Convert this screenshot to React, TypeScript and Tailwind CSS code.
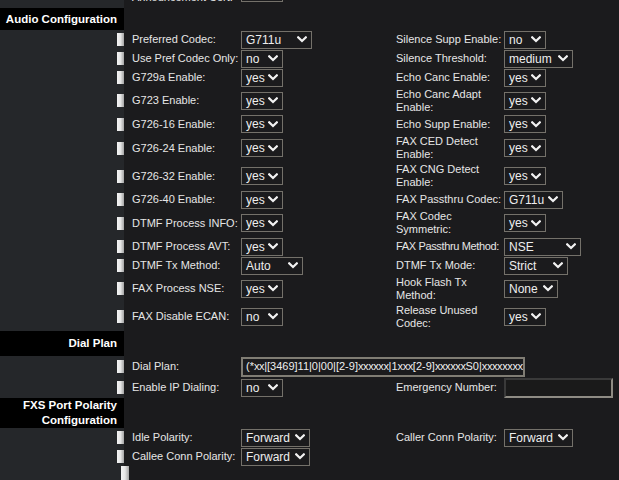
import React from "react";

const SIDE = "bg-[#25272a]";
const MAIN = "bg-[#1b1b1d]";

const H: Record<number, string> = {
  19: "h-[19px]",
  20: "h-[20px]",
  21: "h-[21px]",
  27: "h-[27px]",
  28: "h-[28px]",
  29: "h-[29px]",
};

const W: Record<number, string> = {
  42: "w-[42px]",
  54: "w-[54px]",
  59: "w-[59px]",
  62: "w-[62px]",
  64: "w-[64px]",
  69: "w-[69px]",
  71: "w-[71px]",
  77: "w-[77px]",
};

function Chevron() {
  return (
    <svg width="10" height="7" viewBox="0 0 10 7" className="shrink-0">
      <path d="M1.2 1.4 L5 5 L8.8 1.4" fill="none" stroke="#f2f2f2" strokeWidth="2.2" strokeLinecap="square" />
    </svg>
  );
}

function Sel({ t, w }: { t: string; w: number }) {
  return (
    <div
      className={`${W[w]} h-[18px] border border-[#74716a] flex items-center justify-between pl-[4px] pr-[4px] text-[12px] leading-none text-[#eeeeee]`}
    >
      <span>{t}</span>
      <Chevron />
    </div>
  );
}

function Handle() {
  return <div className="w-[7px] h-[13px] bg-gradient-to-r from-[#f4f4f4] via-[#e6e6e6] to-[#a4a4a4]" />;
}

function Side({ handle = true }: { handle?: boolean }) {
  return (
    <div className={`w-[124px] shrink-0 ${SIDE} flex items-center justify-end`}>
      {handle ? <Handle /> : null}
    </div>
  );
}

type Row = {
  l: string;
  lv: [string, number];
  r: string;
  rv: [string, number];
  h: number;
  nw?: boolean;
};

const audio: Row[] = [
  { l: "Preferred Codec:", lv: ["G711u", 71], r: "Silence Supp Enable:", rv: ["no", 42], h: 19 },
  { l: "Use Pref Codec Only:", lv: ["no", 42], r: "Silence Threshold:", rv: ["medium", 69], h: 19 },
  { l: "G729a Enable:", lv: ["yes", 42], r: "Echo Canc Enable:", rv: ["yes", 42], h: 19 },
  { l: "G723 Enable:", lv: ["yes", 42], r: "Echo Canc Adapt Enable:", rv: ["yes", 42], h: 27 },
  { l: "G726-16 Enable:", lv: ["yes", 42], r: "Echo Supp Enable:", rv: ["yes", 42], h: 20 },
  { l: "G726-24 Enable:", lv: ["yes", 42], r: "FAX CED Detect Enable:", rv: ["yes", 42], h: 28 },
  { l: "G726-32 Enable:", lv: ["yes", 42], r: "FAX CNG Detect Enable:", rv: ["yes", 42], h: 28 },
  { l: "G726-40 Enable:", lv: ["yes", 42], r: "FAX Passthru Codec:", rv: ["G711u", 59], h: 19 },
  { l: "DTMF Process INFO:", lv: ["yes", 42], r: "FAX Codec Symmetric:", rv: ["yes", 42], h: 28 },
  { l: "DTMF Process AVT:", lv: ["yes", 42], r: "FAX Passthru Method:", rv: ["NSE", 77], h: 19, nw: true },
  { l: "DTMF Tx Method:", lv: ["Auto", 62], r: "DTMF Tx Mode:", rv: ["Strict", 64], h: 19 },
  { l: "FAX Process NSE:", lv: ["yes", 42], r: "Hook Flash Tx Method:", rv: ["None", 54], h: 27 },
  { l: "FAX Disable ECAN:", lv: ["no", 42], r: "Release Unused Codec:", rv: ["yes", 42], h: 29 },
];

function FormRow({ row }: { row: Row }) {
  return (
    <div className={`flex ${H[row.h]}`}>
      <Side />
      <div className={`flex-1 ${MAIN} flex items-center`}>
        <div className="w-[117px] shrink-0 pl-[8px] whitespace-nowrap">{row.l}</div>
        <div className="w-[155px] shrink-0">
          <Sel t={row.lv[0]} w={row.lv[1]} />
        </div>
        <div
          className={`w-[108px] shrink-0 leading-[13px] ${row.nw ? "whitespace-nowrap tracking-[-0.35px]" : ""}`}
        >
          {row.r}
        </div>
        <div>
          <Sel t={row.rv[0]} w={row.rv[1]} />
        </div>
      </div>
    </div>
  );
}

function Header({ children, cls }: { children: React.ReactNode; cls: string }) {
  return (
    <div className={`flex ${cls}`}>
      <div className="w-[124px] shrink-0 bg-black text-white font-bold text-[11.5px] text-right pr-[7px] flex flex-col justify-center leading-[15px]">
        {children}
      </div>
      <div className={`flex-1 ${MAIN}`} />
    </div>
  );
}

function X({ children }: { children: string }) {
  return <span className="tracking-[-0.4px]">{children}</span>;
}

export default function App() {
  return (
    <div
      className={`w-[619px] h-[480px] overflow-hidden ${MAIN} text-[11px] text-[#e6e6e6]`}
      style={{ fontFamily: '"Liberation Sans", Arial, Helvetica, sans-serif' }}
    >
      {/* partially visible row at top */}
      <div className="flex h-[19px] -mt-[16px]">
        <Side handle={false} />
        <div className={`flex-1 ${MAIN} flex items-start`}>
          <div className="w-[117px] shrink-0 pl-[8px] whitespace-nowrap self-end leading-[13px] translate-y-[1px]">
            Announcement Cert:
          </div>
          <div className="w-[155px] shrink-0">
            <Sel t="no" w={42} />
          </div>
        </div>
      </div>
      <div className="flex h-[5px]">
        <Side handle={false} />
        <div className={`flex-1 ${MAIN}`} />
      </div>

      <Header cls="h-[22px]">Audio Configuration</Header>

      {audio.map((r) => (
        <FormRow key={r.l} row={r} />
      ))}

      <Header cls="h-[25px]">Dial Plan</Header>

      <div className="flex h-[21px]">
        <Side />
        <div className={`flex-1 ${MAIN} flex items-center`}>
          <div className="w-[117px] shrink-0 pl-[8px] whitespace-nowrap">Dial Plan:</div>
          <div className="w-[284px] h-[20px] border-2 border-[#807d74] flex items-center pl-[3px] overflow-hidden whitespace-nowrap text-[11px] text-[#eeeeee]">
            (*<X>xx</X>|[3469]11|0|00|[2-9]<X>xxxxxx</X>|1<X>xxx</X>[2-9]<X>xxxxxx</X>S0|<X>xxxxxxxxxxxxxx</X>.)
          </div>
        </div>
      </div>

      <div className="flex h-[21px]">
        <Side />
        <div className={`flex-1 ${MAIN} flex items-center`}>
          <div className="w-[117px] shrink-0 pl-[8px] whitespace-nowrap">Enable IP Dialing:</div>
          <div className="w-[155px] shrink-0">
            <Sel t="no" w={42} />
          </div>
          <div className="w-[108px] shrink-0 leading-[13px]">Emergency Number:</div>
          <div className="w-[109px] h-[20px] border-2 border-t-[#3a3a3a] border-l-[#3a3a3a] border-b-[#8f8c84] border-r-[#8f8c84] bg-[#1a1a1a]" />
        </div>
      </div>

      <Header cls="h-[30px]">
        <span>FXS Port Polarity</span>
        <span>Configuration</span>
      </Header>

      <div className="flex h-[19px]">
        <Side />
        <div className={`flex-1 ${MAIN} flex items-center`}>
          <div className="w-[117px] shrink-0 pl-[8px] whitespace-nowrap">Idle Polarity:</div>
          <div className="w-[155px] shrink-0">
            <Sel t="Forward" w={69} />
          </div>
          <div className="w-[108px] shrink-0 leading-[13px]">Caller Conn Polarity:</div>
          <Sel t="Forward" w={69} />
        </div>
      </div>
      <div className="flex h-[19px]">
        <Side />
        <div className={`flex-1 ${MAIN} flex items-center`}>
          <div className="w-[117px] shrink-0 pl-[8px] whitespace-nowrap">Callee Conn Polarity:</div>
          <div className="w-[155px] shrink-0">
            <Sel t="Forward" w={69} />
          </div>
        </div>
      </div>

      <div className="flex h-[30px]">
        <div className={`w-[121px] shrink-0 ${SIDE}`} />
        <div className="w-[8px] shrink-0 bg-gradient-to-r from-[#f4f4f4] via-[#e6e6e6] to-[#a4a4a4]" />
        <div className={`flex-1 ${MAIN}`} />
      </div>
    </div>
  );
}
